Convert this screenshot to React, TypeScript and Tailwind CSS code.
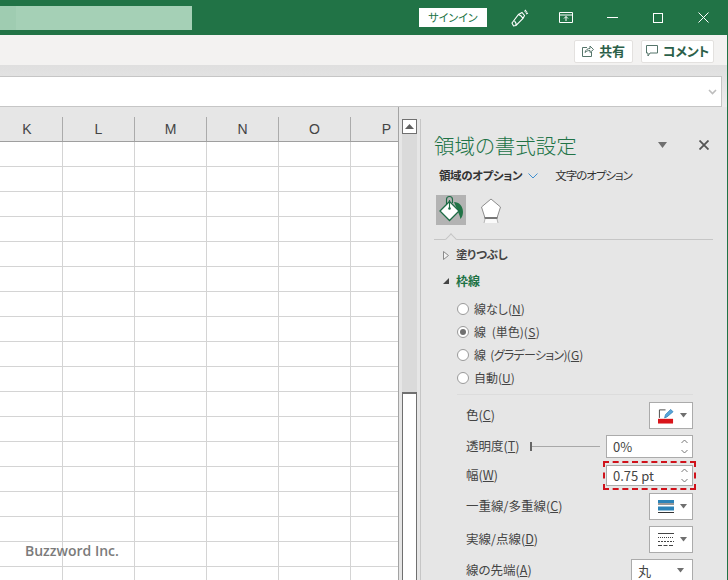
import { FC, ReactNode } from "react";

const ROWS = Array.from({ length: 18 }, (_, i) => i);
const COLUMNS = ["K", "L", "M", "N", "O", "P"];
const COLUMN_GRID = "grid grid-cols-[63px_72px_72px_72px_72px_47px]";

const Caret: FC = () => (
  <svg width="7" height="5" viewBox="0 0 7 5" className="shrink-0">
    <path d="M0 0h7L3.5 4.5z" fill="#6f6f6f" />
  </svg>
);

const SpinArrows: FC = () => (
  <svg width="9" height="17" viewBox="0 0 9 17" className="shrink-0">
    <path d="M1.5 5L4.5 2l3 3M1.5 12l3 3 3-3" fill="none" stroke="#777" strokeWidth="1" />
  </svg>
);

const TitleBar: FC = () => (
  <div className="flex h-[35px] shrink-0 items-center bg-[#217346]">
    <div className="flex h-[24px] w-[192px] bg-[#a5d0b6]">
      <div className="h-full w-[16px] bg-[#9fccb1]" />
    </div>
    <div className="ml-[227px] flex h-[19px] w-[68px] items-center justify-center bg-white text-[11px] text-[#217346]">
      サインイン
    </div>
    <svg width="18" height="18" viewBox="0 0 18 18" className="ml-[24px]" fill="none" stroke="#fff" strokeWidth="1.1">
      <path d="M1 14L7.500 5.500C9 6 11 7.500 12 9.500L5 16.500l-2.500 .5zM5 16.500c.5-1.500 0-3-1.500-4.500M7.500 5.500L11 3.500l2.500 3L12 9.500M13.500 2.500L15 1M15 5l2-1M14.500 3.500l1.500-1" />
    </svg>
    <svg width="14" height="12" viewBox="0 0 14 12" className="ml-[30px]" fill="none" stroke="#fff" strokeWidth="1">
      <path d="M.5 .5h13v10H.5zM.5 3h13M7 9V4.500M5 6.500l2-2 2 2" />
    </svg>
    <div className="ml-[34px] h-px w-[11px] bg-white" />
    <div className="ml-[35px] size-[10px] border border-white" />
    <svg width="11" height="11" viewBox="0 0 11 11" className="ml-[35px]" stroke="#fff" strokeWidth="1">
      <path d="M.5 .5l10 10M10.5 .5l-10 10" />
    </svg>
  </div>
);

const RibbonButton: FC<{ width: string; icon: ReactNode; label: string }> = ({ width, icon, label }) => (
  <div className={`flex h-[23px] items-center justify-center gap-[5px] rounded-[2px] border border-[#e3e1df] bg-white text-[13px] font-bold tracking-[-0.2px] text-[#2b5f49] ${width}`}>
    {icon}
    <span>{label}</span>
  </div>
);

const Ribbon: FC = () => (
  <div className="flex h-[30px] shrink-0 items-center justify-end gap-[8px] bg-[#f3f2f1] pr-[13px] pt-[2px]">
    <RibbonButton
      width="w-[59px]"
      label="共有"
      icon={
        <svg width="12" height="12" viewBox="0 0 12 12" fill="none" stroke="#55756a" strokeWidth="1">
          <path d="M5 2.500H.5v9h9V7M3 7.500C3.500 4.500 6 3.500 8 3.500V1l3.500 3.500L8 7.500V5.500c-2 0-3.500 .5-5 2z" />
        </svg>
      }
    />
    <RibbonButton
      width="w-[73px]"
      label="コメント"
      icon={
        <svg width="12" height="12" viewBox="0 0 12 12" fill="none" stroke="#55756a" strokeWidth="1">
          <path d="M.5 .5h11v7.500H4L2 11V8H.5z" />
        </svg>
      }
    />
  </div>
);

const FormulaBar: FC = () => (
  <div className="shrink-0 bg-gradient-to-b from-[#dfdfdf] to-[#ececec] pt-[11px]">
    <div className="mr-[5px] flex h-[31px] items-center justify-end border-y border-r border-[#c6c6c6] bg-white pr-[4px]">
      <svg width="9" height="6" viewBox="0 0 9 6" fill="none" stroke="#bdbdbd" strokeWidth="1.6">
        <path d="M1 1l3.500 3.500L8 1" />
      </svg>
    </div>
  </div>
);

const Sheet: FC = () => (
  <div className="relative w-[399px] shrink-0 border-r border-[#a3a3a3] bg-white">
    <div className={`${COLUMN_GRID} h-[35px] border-b border-[#9f9f9f] bg-[#e6e6e6] pt-[10px]`}>
      {COLUMNS.map((c, i) => (
        <div
          key={c}
          className={`flex items-center justify-center font-['Liberation_Sans',sans-serif] text-[14px] text-[#444] ${i < 5 ? "border-r border-[#ababab]" : ""} ${i === 0 ? "pr-[8px]" : ""} ${i === 5 ? "pl-[24px]" : ""}`}
        >
          {c}
        </div>
      ))}
    </div>
    {ROWS.map((r) => (
      <div key={r} className={`${COLUMN_GRID} h-[25px]`}>
        {COLUMNS.map((c, i) => (
          <div key={c} className={`border-b border-[#d4d4d4] ${i < 5 ? "border-r" : ""}`} />
        ))}
      </div>
    ))}
    <div className="absolute left-[25px] top-[433px] font-['Open_Sans',sans-serif] text-[14px] font-semibold text-[#7b7b7b]">
      Buzzword Inc.
    </div>
  </div>
);

const ScrollBar: FC = () => (
  <div className="w-[22px] shrink-0 bg-[#e6e6e6] pl-[3px] pt-[12px]">
    <div className="flex h-full flex-col border-r border-[#c6c6c6] pr-[3px]">
      <div className="flex h-[15px] items-center justify-center border border-[#707070] bg-white">
        <svg width="9" height="5" viewBox="0 0 9 5">
          <path d="M0 5L4.500 0 9 5z" fill="#606060" />
        </svg>
      </div>
      <div className="h-[258px] bg-[#dadada]" />
      <div className="flex-1 border-x border-t-2 border-[#707070] bg-white" />
    </div>
  </div>
);

const BucketIcon: FC = () => (
  <svg width="30" height="30" viewBox="0 0 30 30">
    <path d="M18 7c5 0 9 4 9 10 0 3-1 5-2.500 7-.5-2-1-4-2-6z" fill="#217346" />
    <path d="M4 16l9.500-9.500L23 16l-9.500 9.500z" fill="#fff" stroke="#1d6b45" strokeWidth="1.300" />
    <path d="M10.500 9V4.500a3 3 0 0 1 6 0V8M13.500 5v8" fill="none" stroke="#1d6b45" strokeWidth="1.100" />
    <circle cx="13.500" cy="13.500" r="1.300" fill="#1d6b45" />
  </svg>
);

const PentagonIcon: FC = () => (
  <svg width="20" height="26" viewBox="0 0 20 26">
    <path d="M10 1l9.500 8-3.500 11H4L.5 9z" fill="#fff" stroke="#8c8c8c" strokeWidth="1" />
    <path d="M4 21h12l1 4H3z" fill="#fff" opacity=".8" />
    <path d="M3.500 20h13" stroke="#777" strokeWidth="2" />
    <path d="M4 21l-1 4M16 21l1 4" stroke="#b5b5b5" strokeWidth="1" />
  </svg>
);

const PenColorIcon: FC = () => (
  <svg width="17" height="16" viewBox="0 0 17 16">
    <path d="M8 1.500H1.500V10" fill="none" stroke="#444" strokeWidth="1" />
    <path d="M7 10l1-3.500L13.500 1 16 3.500 9.500 9z" fill="#5aa5d8" stroke="#2d7fb8" strokeWidth=".8" />
    <path d="M0 11h16v5H0z" fill="#d9141a" />
  </svg>
);

const CompoundIcon: FC = () => (
  <svg width="16" height="13" viewBox="0 0 16 13">
    <path d="M0 0h16v3H0zM0 6.500h16v4H0z" fill="#2b83b8" />
    <path d="M0 4h16M0 12.500h16" stroke="#333" strokeWidth="1" />
  </svg>
);

const DashIcon: FC = () => (
  <svg width="16" height="13" viewBox="0 0 16 13" stroke="#444" strokeWidth="1">
    <path d="M0 .5h16" />
    <path d="M0 4.500h16" strokeDasharray="1 1" />
    <path d="M0 8.500h16" strokeDasharray="2 1" />
    <path d="M0 12.500h16" strokeDasharray="4 1.500" />
  </svg>
);

const Radio: FC<{ checked?: boolean; children: ReactNode }> = ({ checked, children }) => (
  <div className="flex h-[20px] items-center gap-[5px] pl-[23px] text-[12px] text-[#444]">
    <div className="flex size-[12px] items-center justify-center rounded-full border border-[#9a9a9a] bg-white">
      {checked && <div className="size-[6px] rounded-full bg-[#707070]" />}
    </div>
    <span className="whitespace-nowrap">{children}</span>
  </div>
);

const FieldRow: FC<{ label: ReactNode; className: string; children: ReactNode }> = ({ label, className, children }) => (
  <div className={`flex items-center justify-between pl-[32px] pr-[34px] text-[12.5px] text-[#444] ${className}`}>
    <span className="whitespace-nowrap">{label}</span>
    {children}
  </div>
);

const IconButton: FC<{ children: ReactNode }> = ({ children }) => (
  <div className="flex h-full w-[44px] items-center gap-[6px] border border-[#ababab] bg-white pl-[8px]">
    <div className="flex w-[16px] justify-start">{children}</div>
    <Caret />
  </div>
);

const Spinner: FC<{ value: string }> = ({ value }) => (
  <div className="flex h-full w-[87px] items-center justify-between border border-[#ababab] bg-white pl-[6px] pr-[3px] text-[13px] text-[#444]">
    <span>{value}</span>
    <SpinArrows />
  </div>
);

const FormatPanel: FC = () => (
  <div className="relative flex-1 bg-[#e6e6e6] pl-[13px] pt-[25px]">
    <div className="flex h-[26px] items-center">
      <span className="text-[20.5px] font-light leading-none text-[#217346]">領域の書式設定</span>
      <div className="ml-[81px]">
        <svg width="9" height="6" viewBox="0 0 9 6">
          <path d="M0 0h9L4.500 6z" fill="#6f6f6f" />
        </svg>
      </div>
      <svg width="10" height="10" viewBox="0 0 10 10" className="ml-[32px]" stroke="#555" strokeWidth="1.800">
        <path d="M.5 .5l9 9M9.500 .5l-9 9" />
      </svg>
    </div>

    <div className="mt-[8px] flex h-[20px] items-center pl-[5px] text-[11.5px] text-[#333]">
      <span className="font-bold tracking-[-0.4px]">領域のオプション</span>
      <svg width="10" height="6" viewBox="0 0 10 6" fill="none" stroke="#3f8fd0" strokeWidth="1" className="ml-[6px]">
        <path d="M.5 .5L5 5 9.500 .5" />
      </svg>
      <span className="ml-[17px] tracking-[-1px]">文字のオプション</span>
    </div>

    <div className="mt-[9px] flex h-[30px] items-center pl-[2px]">
      <div className="size-[30px] bg-[#b3b3b3]">
        <BucketIcon />
      </div>
      <div className="ml-[15px] mt-[2px]">
        <PentagonIcon />
      </div>
    </div>

    <div className="relative mr-[14px] mt-[14px] h-px bg-[#c6c6c6]">
      <div className="absolute left-[13px] top-[-4px] size-[8px] rotate-45 border-l border-t border-[#c6c6c6] bg-[#e6e6e6]" />
    </div>

    <div className="mt-[6px] flex h-[18px] items-center gap-[7px] pl-[9px] text-[11.5px] font-bold tracking-[-0.3px] text-[#444]">
      <svg width="6" height="9" viewBox="0 0 6 9">
        <path d="M.5 .5l5 4-5 4z" fill="#f2f2f2" stroke="#8a8a8a" />
      </svg>
      <span>塗りつぶし</span>
    </div>
    <div className="mt-[8px] flex h-[18px] items-center gap-[7px] pl-[9px] text-[12px] font-bold text-[#217346]">
      <svg width="6" height="6" viewBox="0 0 6 6">
        <path d="M6 0v6H0z" fill="#444" />
      </svg>
      <span>枠線</span>
    </div>

    <div className="mt-[9px] flex flex-col gap-[3px]">
      <Radio>
        線なし(<u>N</u>)
      </Radio>
      <Radio checked>
        <span className="[word-spacing:3px]">線 (単色)</span>
        <span className="tracking-[0.3px]">(<u>S</u>)</span>
      </Radio>
      <Radio>
        <span className="tracking-[-0.7px] [word-spacing:3px]">線 (グラデーション)</span>(<u>G</u>)
      </Radio>
      <Radio>
        自動(<u>U</u>)
      </Radio>
    </div>

    <div className="ml-[23px] mr-[34px] mt-[6px] h-px bg-[#dcdcdc]" />

    <FieldRow className="mt-[7px] h-[27px]" label={<>色(<u>C</u>)</>}>
      <IconButton>
        <PenColorIcon />
      </IconButton>
    </FieldRow>

    <FieldRow className="mt-[6px] h-[23px]" label={<>透明度(<u>T</u>)</>}>
      <div className="flex h-full items-center gap-[6px]">
        <div className="flex w-[70px] items-center">
          <div className="h-[9px] w-[2px] bg-[#666]" />
          <div className="h-px flex-1 bg-[#a8a8a8]" />
        </div>
        <Spinner value="0%" />
      </div>
    </FieldRow>

    <FieldRow className="relative mt-[7px] h-[21px]" label={<>幅(<u>W</u>)</>}>
      <Spinner value="0.75 pt" />
      <div className="absolute right-[31px] top-[-4px] h-[29px] w-[93px] border-2 border-dashed border-[#d0121b]" />
    </FieldRow>

    <FieldRow className="mt-[7px] h-[27px]" label={<>一重線/多重線(<u>C</u>)</>}>
      <IconButton>
        <CompoundIcon />
      </IconButton>
    </FieldRow>

    <FieldRow className="mt-[6px] h-[27px]" label={<>実線/点線(<u>D</u>)</>}>
      <IconButton>
        <DashIcon />
      </IconButton>
    </FieldRow>

    <FieldRow className="mt-[6px] h-[23px]" label={<>線の先端(<u>A</u>)</>}>
      <div className="flex h-full w-[62px] items-center justify-between border border-[#ababab] bg-white pl-[6px] pr-[8px] text-[13px]">
        <span>丸</span>
        <Caret />
      </div>
    </FieldRow>
  </div>
);

export default function App() {
  return (
    <div className="flex h-[580px] w-[728px] flex-col overflow-hidden border-r border-[#217346] bg-[#e6e6e6] font-['Noto_Sans_CJK_JP','Liberation_Sans',sans-serif] [font-feature-settings:'palt']">
      <TitleBar />
      <Ribbon />
      <FormulaBar />
      <div className="flex min-h-0 flex-1">
        <Sheet />
        <ScrollBar />
        <FormatPanel />
      </div>
    </div>
  );
}
